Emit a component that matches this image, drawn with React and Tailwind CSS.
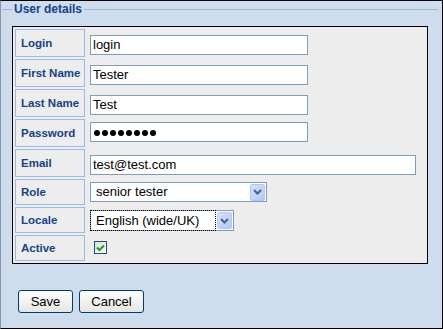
function Chevron() {
  return (
    <svg width="9" height="6" viewBox="0 0 9 6">
      <path d="M1 1 L4.5 4.5 L8 1" fill="none" stroke="#4D6185" strokeWidth="2" />
    </svg>
  );
}

function DropButton() {
  return (
    <div className="w-[15px] h-[17px] mr-[1px] rounded-[2px] border border-[#B4C8F4] bg-gradient-to-br from-[#D4E2FD] to-[#B3C8F5] flex items-center justify-center">
      <Chevron />
    </div>
  );
}

function Row({ label, h = "h-[28px]", children }) {
  return (
    <div className={`flex gap-[2px] ${h}`}>
      <div className="w-[70px] shrink-0 border border-[#99BBE8] flex items-center pl-[5px] pt-[1px] font-bold text-[11.5px] text-[#15428B]">
        {label}
      </div>
      <div className="flex-1 pl-[3px] pt-[3px]">{children}</div>
    </div>
  );
}

function TextInput({ value, w = "w-[218px]" }) {
  return (
    <input
      readOnly
      defaultValue={value}
      className={`${w} h-[20px] border border-[#7F9DB9] bg-white px-[2px] text-[13px] text-black outline-none`}
    />
  );
}

export default function App() {
  return (
    <div className="w-[443px] h-[329px] bg-[#CDDDEE] border border-black border-l-[#8797a8] font-['Liberation_Sans',Arial,sans-serif]">
      <fieldset className="mt-[1px] ml-[1px] mr-[4px] border-t border-[#A7B6CB] px-[10px]">
        <legend className="px-[2px] text-[12px] leading-[14px] font-bold text-[#15428B]">User details</legend>
        <div className="mt-[10px] border border-black bg-[#EDEDED] p-[2px] flex flex-col gap-[2px]">
          <Row label="Login">
            <TextInput value="login" />
          </Row>
          <Row label="First Name">
            <TextInput value="Tester" />
          </Row>
          <Row label="Last Name">
            <TextInput value="Test" />
          </Row>
          <Row label="Password">
            <div className="w-[218px] h-[20px] border border-[#7F9DB9] bg-white pl-[3px] pt-[1px] flex items-center gap-[2px]">
              {[0, 1, 2, 3, 4, 5, 6, 7].map((i) => (
                <span key={i} className="w-[6px] h-[6px] rounded-full bg-black" />
              ))}
            </div>
          </Row>
          <Row label="Email">
            <TextInput value="test@test.com" w="w-[326px]" />
          </Row>
          <Row label="Role" h="h-[26px]">
            <div className="w-[177px] h-[20px] border border-[#7F9DB9] bg-white flex items-center">
              <span className="flex-1 pl-[5px] text-[13px] text-black">senior tester</span>
              <DropButton />
            </div>
          </Row>
          <Row label="Locale" h="h-[26px]">
            <div className="w-[144px] h-[21px] border border-[#7F9DB9] bg-white flex items-center">
              <span className="flex-1 h-[21px] -ml-[1px] -my-[1px] mr-[1px] border border-dotted border-black pl-[5px] text-[13px] leading-[19px] text-black">
                English (wide/UK)
              </span>
              <DropButton />
            </div>
          </Row>
          <Row label="Active" h="h-[26px]">
            <div className="ml-[4px] mt-[3px] w-[13px] h-[13px] border border-[#1C5180] bg-gradient-to-br from-[#DCDCD7] to-white flex items-center justify-center">
              <svg width="9" height="8" viewBox="0 0 9 8">
                <path d="M1 3.5 L3.5 6 L8 1.5" fill="none" stroke="#21A121" strokeWidth="2.2" />
              </svg>
            </div>
          </Row>
        </div>
      </fieldset>
      <div className="flex gap-[6px] pl-[17px] pt-[26px]">
        <button className="w-[55px] h-[23px] border border-[#003C74] rounded-[3px] bg-gradient-to-b from-white to-[#E6E5DE] text-[13px] text-black">
          Save
        </button>
        <button className="w-[65px] h-[23px] border border-[#003C74] rounded-[3px] bg-gradient-to-b from-white to-[#E6E5DE] text-[13px] text-black">
          Cancel
        </button>
      </div>
    </div>
  );
}
